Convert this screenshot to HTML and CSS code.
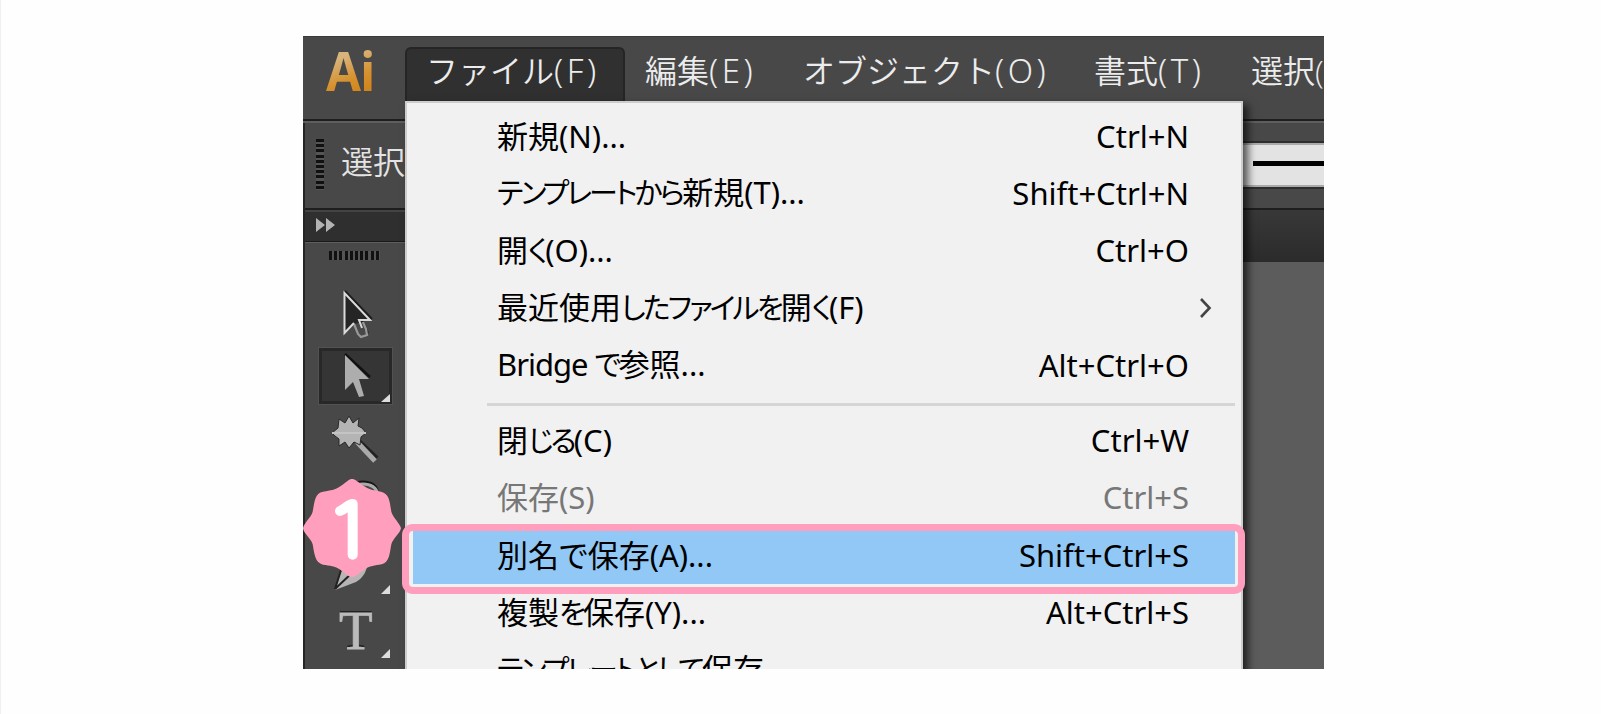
FILE: index.html
```
<!DOCTYPE html>
<html lang="ja">
<head>
    <meta charset="UTF-8">
    <meta name="viewport" content="width=device-width, initial-scale=1.0">
    <title>別名で保存</title>
    <link rel="stylesheet" href="styles.css">
</head>
<body>
    <div class="app">
        <div class="menubar">
            <div class="logo"><span>Ai</span></div>
            <div class="menu-title active t-file">ファイル<span class="key">(F)</span></div>
            <div class="menu-title t-edit">編集<span class="key">(E)</span></div>
            <div class="menu-title t-object">オブジェクト<span class="key">(O)</span></div>
            <div class="menu-title t-type">書式<span class="key">(T)</span></div>
            <div class="menu-title t-select">選択(</div>
        </div>

        <div class="control-bar">
            <div class="grip-v"></div>
            <div class="control-label">選択</div>
            <div class="stroke-box"><div class="stroke-line"></div></div>
        </div>

        <div class="workspace">
            <div class="sidebar">
                <div class="sidebar-head">
                    <svg width="20" height="16" viewBox="0 0 20 16"><path d="M0 1L9 8L0 15zM10 1L19 8L10 15z" fill="#b4b4b4"/></svg>
                </div>
                <div class="toolbar">
                    <div class="grip-h"></div>
                    <div class="tool">
                        <svg width="73" height="56" viewBox="0 0 73 56">
                            <path d="M26 5L53 33" fill="none" stroke="#1d1d1d" stroke-width="2"/>
                            <path d="M25.500 7V47L34 38L40 50L50 47L45 35H52z" fill="#252525"/>
                            <path d="M35 38L39 48L42 51L48 49L47 43L44 36" fill="#484848" stroke="#999" stroke-width="2.200"/>
                            <path d="M35 37L25.500 47V7L51 34H40L43 42" fill="none" stroke="#dadada" stroke-width="2"/>
                        </svg>
                    </div>
                    <div class="tool selected">
                        <svg width="73" height="56" viewBox="0 0 73 56">
                            <path d="M26 6L51 29" stroke="#111" stroke-width="2.500"/>
                            <path d="M26 7V42L34 34L40 49L45 48L40 31H50z" fill="#adadad"/>
                            <path d="M71 46V54H62z" fill="#ddd"/>
                        </svg>
                    </div>
                    <div class="tool">
                        <svg width="73" height="56" viewBox="0 0 73 56">
                            <path d="M39 31L57 48" stroke="#222" stroke-width="7"/>
                            <path d="M38 31L56 50" stroke="#aaa" stroke-width="5"/>
                            <path d="M30 5L34 12L40 7L39 15L43 17L47 22L42 26L41 34L35 31L30 37L26 31L20 35L20 28L16 25L13 22L19 17L20 8L26 12z" fill="#b4b4b4" stroke="#282828" stroke-width="1"/>
                            <path d="M13 22H47" stroke="#c4c4c4" stroke-width="2"/>
                        </svg>
                    </div>
                    <div class="tool">
                        <svg width="73" height="56" viewBox="0 0 73 56">
                            <ellipse cx="44" cy="18" rx="14" ry="9" fill="none" stroke="#161616" stroke-width="3"/>
                            <ellipse cx="44" cy="20" rx="14" ry="9" fill="none" stroke="#aaa" stroke-width="3"/>
                        </svg>
                    </div>
                    <div class="tool">
                        <svg width="73" height="56" viewBox="0 0 73 56">
                            <path d="M49 22Q49 39 37 46L16 54L23 33L30 24z" fill="#b5b5b5"/>
                            <path d="M16 53L35 35M16 53L22 34" stroke="#222" stroke-width="2"/>
                            <path d="M71 49V58H62z" fill="#ddd"/>
                        </svg>
                    </div>
                    <div class="tool type-tool">
                        <span>T</span>
                        <svg class="corner" width="9" height="9" viewBox="0 0 9 9"><path d="M9 0V9H0z" fill="#ddd"/></svg>
                    </div>
                </div>
            </div>
            <div class="document">
                <div class="tabs"></div>
            </div>
        </div>

        <div class="dropdown">
            <div class="item"><span class="label">新規(N)...</span><kbd>Ctrl+N</kbd></div>
            <div class="item"><span class="label"><span class="kana">テンプレートから</span>新規(T)...</span><kbd>Shift+Ctrl+N</kbd></div>
            <div class="item"><span class="label">開<span class="kana">く</span>(O)...</span><kbd>Ctrl+O</kbd></div>
            <div class="item">
                <span class="label">最近使用<span class="kana">したファイルを</span>開<span class="kana">く</span>(F)</span>
                <svg class="chevron" width="13" height="20" viewBox="0 0 13 20"><path d="M2 1L10.500 10L2 19" fill="none" stroke="#444" stroke-width="2.600"/></svg>
            </div>
            <div class="item"><span class="label"><span class="latin">Bridge </span><span class="kana">で</span>参照...</span><kbd>Alt+Ctrl+O</kbd></div>
            <div class="separator"></div>
            <div class="item"><span class="label">閉<span class="kana">じる</span>(C)</span><kbd>Ctrl+W</kbd></div>
            <div class="item disabled"><span class="label">保存(S)</span><kbd>Ctrl+S</kbd></div>
            <div class="item highlighted"><span class="label">別名で保存(A)...</span><kbd>Shift+Ctrl+S</kbd></div>
            <div class="item"><span class="label">複製<span class="kana">を</span>保存(Y)...</span><kbd>Alt+Ctrl+S</kbd></div>
            <div class="item"><span class="label"><span class="kana">テンプレートとして</span>保存</span></div>
        </div>
    </div>

    <div class="callout"></div>
    <div class="badge">
        <svg width="98" height="98" viewBox="0 0 294 294">
            <path d="M0 148C2 132 24 116 29 98C34 74 34 42 60 38C84 34 96 34 112 22C132 8 138 0 147 0C156 0 164 8 184 22C200 34 216 34 234 38C260 44 260 70 265 98C270 116 292 134 294 148C292 162 270 178 265 196C260 222 260 250 236 256C216 260 200 260 184 272C166 284 158 294 147 294C136 294 128 284 112 272C96 260 80 260 60 257C36 252 34 224 29 196C24 178 2 164 0 148z" fill="#ff9ebd"/>
            <path d="M111 96C132 87 138 74 149 75V227" fill="none" stroke="#fff" stroke-width="30" stroke-linecap="round" stroke-linejoin="round"/>
        </svg>
    </div>
</body>
</html>
```
FILE: styles.css
```
* {
    box-sizing: border-box;
}
body {
    margin: 0;
    height: 714px;
    padding: 36px 0 0 302px;
    border-left: 1px solid #f0f0f0;
    background-color: #fefefe;
    font-family: "Noto Sans", "Noto Sans CJK JP", sans-serif;
    overflow: hidden;
}
svg {
    display: block;
    overflow: visible;
}
.app {
    position: relative;
    display: flex;
    flex-direction: column;
    width: 1021px;
    height: 633px;
    background-color: #484848;
    overflow: hidden;
}

/* menu bar */
.menubar {
    display: flex;
    height: 83px;
    padding-top: 10px;
    border-top: 1px solid #3a3a3a;
    color: #ececec;
    font-family: "Open Sans", "Noto Sans CJK JP", sans-serif;
    font-size: 32px;
    font-weight: 350;
}
.logo {
    flex: none;
    width: 102px;
    padding-left: 23px;
    font-size: 54px;
    font-weight: 700;
    line-height: 46px;
}
.logo span {
    display: inline-block;
    letter-spacing: -1px;
    color: transparent;
    background: linear-gradient(160deg, #d8b47c 25%, #d6912c 65%, #cf8015);
    -webkit-background-clip: text;
    background-clip: text;
    transform: scaleX(0.94);
    transform-origin: left;
}
.menu-title {
    flex: none;
    height: 54px;
    line-height: 48px;
    white-space: nowrap;
}
.menu-title.active {
    background-color: #303030;
    border: 2px solid #252525;
    border-bottom: 0;
    border-radius: 6px 6px 0 0;
    line-height: 44px;
}
.key {
    font-family: "Noto Sans", sans-serif;
    font-size: 33px;
    letter-spacing: 3.500px;
}
.t-file {
    width: 220px;
    padding-left: 19px;
}
.t-edit {
    width: 158px;
    padding-left: 20px;
}
.t-object {
    width: 291px;
    padding-left: 20px;
}
.t-type {
    width: 157px;
    padding-left: 20px;
}
.t-select {
    padding-left: 20px;
}

/* control bar */
.control-bar {
    display: flex;
    align-items: center;
    height: 89px;
    border-top: 2px solid #1e1e1e;
    box-shadow: inset 0 2px #5e5e5e, inset 2px 0 #252525;
    padding-left: 13px;
}
.grip-v {
    width: 8px;
    height: 51px;
    background: repeating-linear-gradient(#111 0 3px, #555 3px 5.200px);
}
.control-label {
    margin-left: 17px;
    color: #e4e4e4;
    font-size: 32px;
    font-weight: 350;
    line-height: 40px;
    padding-bottom: 5px;
}
.stroke-box {
    display: flex;
    align-items: center;
    width: 82px;
    height: 44px;
    margin-left: auto;
    background-color: #e3e3e3;
    border-top: 2px solid #aaa;
    border-bottom: 2px solid #aaa;
    outline: 2px solid #2e2e2e;
}
.stroke-line {
    width: 71px;
    height: 5px;
    margin-left: 11px;
    margin-bottom: 3px;
    background-color: #000;
}

/* tools */
.workspace {
    display: flex;
    flex: 1;
}
.sidebar {
    width: 103px;
    border-left: 2px solid #252525;
}
.sidebar-head {
    height: 33px;
    padding: 7px 0 0 11px;
    background-color: #2f2f2f;
    border-top: 2px solid #1e1e1e;
    box-shadow: inset 0 2px #444;
}
.toolbar {
    display: flex;
    flex-direction: column;
    gap: 6.600px;
    padding: 8px 0 0 14px;
    border-top: 1px solid #1a1a1a;
    box-shadow: inset 0 1px #5e5e5e;
}
.grip-h {
    width: 51px;
    height: 9px;
    margin: 1px 0 19px 10px;
    background: repeating-linear-gradient(90deg, #111 0 3px, #555 3px 5.200px);
}
.tool {
    flex: none;
    width: 73px;
    height: 56px;
}
.tool.selected {
    background-color: #353535;
    box-shadow: inset 0 0 0 3px #282828, 0 0 0 1px #525252;
}
.type-tool {
    display: flex;
    font-family: "Liberation Serif", serif;
    font-size: 55px;
    line-height: 63px;
    color: #bbb;
    padding-left: 20px;
    text-shadow: 0 -2px #222;
    -webkit-text-stroke: 0.8px #bbb;
}
.type-tool .corner {
    margin: 50px 0 0 8px;
}
.document {
    flex: 1;
    background-color: #5c5c5c;
}
.tabs {
    height: 54px;
    background: linear-gradient(#383838, #2b2b2b);
    border-top: 2px solid #1e1e1e;
}

/* file menu */
.dropdown {
    position: absolute;
    left: 102px;
    top: 65px;
    width: 838px;
    height: 600px;
    padding: 4px 6px 0 6px;
    background-color: #f1f1f1;
    border: 2px solid #cdcdcd;
    box-shadow: 5px 4px 8px rgba(0, 0, 0, 0.65);
}
.item {
    display: flex;
    align-items: center;
    justify-content: space-between;
    height: 57.300px;
    padding: 0 46px 0 84px;
    color: #000;
    font-size: 31px;
    line-height: 40px;
    white-space: nowrap;
}
.label {
    font-feature-settings: "palt";
}
.kana {
    font-size: 29px;
    letter-spacing: -2.800px;
}
.latin {
    letter-spacing: -1px;
}
.item kbd {
    font-family: "Noto Sans", sans-serif;
    font-size: 31px;
}
.item.disabled {
    color: #777;
}
.item.highlighted {
    background-color: #91c8f6;
    box-shadow: 0 1px #91c8f6;
}
.chevron {
    margin-right: -23px;
}
.separator {
    height: 3px;
    margin: 10px 0 5px 74px;
    background-color: #d5d5d5;
}

/* step marker */
.callout {
    position: absolute;
    left: 402px;
    top: 524px;
    width: 843px;
    height: 70px;
    border: 7px solid #ff9ebd;
    border-radius: 11px;
}
.badge {
    position: absolute;
    left: 303px;
    top: 479px;
}
```
